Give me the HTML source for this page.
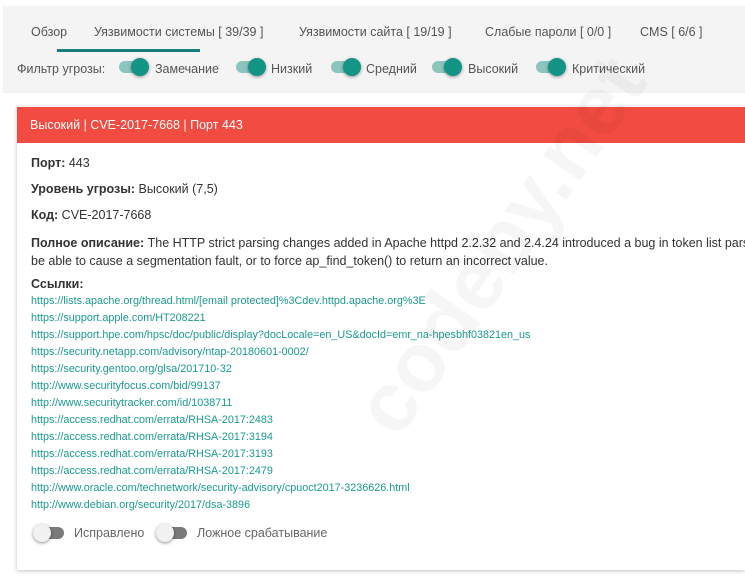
<!DOCTYPE html>
<html><head><meta charset="utf-8"><style>
html,body{margin:0;width:745px;height:583px;overflow:hidden}
body{background:#fff;font-family:"Liberation Sans",sans-serif;position:relative;color:#333}
.panel{position:absolute;left:3px;top:6px;width:742px;height:87px;background:#f4f4f4}
.tab{position:absolute;top:25px;font-size:12.5px;color:#555}
.ul{position:absolute;left:57px;top:49px;width:143px;height:3px;background:#167f7a}
.f{position:absolute;top:62px;font-size:12.5px;color:#555}
.sw{position:absolute;top:61px;width:26px;height:12px;border-radius:6px;background:#8cc5bd}
.sw i{position:absolute;right:-4px;top:-3px;width:18px;height:18px;border-radius:50%;background:#139484;box-shadow:0 1px 3px rgba(0,0,0,.4)}
.card{position:absolute;left:17px;top:107px;width:728px;height:463px;background:#fff;box-shadow:0 1px 4px rgba(0,0,0,.25);overflow:hidden}
.hd{height:36px;background:#f24b41;font-size:12.5px;line-height:36px;padding-left:13px;color:#fff}
.t{position:absolute;left:14px;font-size:12.5px;color:#333;white-space:nowrap}
b{color:#333}
.l{position:absolute;left:14px;font-size:10.8px;color:#1a9a8e;white-space:nowrap}
.off{position:absolute;top:420px;width:28px;height:12px;border-radius:6px;background:#7a7a7a}
.off i{position:absolute;left:-3px;top:-3px;width:18px;height:18px;border-radius:50%;background:#f1f1f1;box-shadow:0 1px 3px rgba(0,0,0,.45)}
.wm{position:absolute;left:500px;top:245px;font-size:84px;font-weight:bold;color:rgba(0,0,0,.035);transform:translate(-50%,-50%) rotate(-55deg);white-space:nowrap}
</style></head><body>
<div class="panel"></div>
<div class="tab" style="left:31px">Обзор</div>
<div class="tab" style="left:94px">Уязвимости системы [ 39/39 ]</div>
<div class="tab" style="left:299px">Уязвимости сайта [ 19/19 ]</div>
<div class="tab" style="left:485px">Слабые пароли [ 0/0 ]</div>
<div class="tab" style="left:640px">CMS [ 6/6 ]</div>
<div class="ul"></div>
<div class="f" style="left:17px">Фильтр угрозы:</div>
<div class="sw" style="left:119px"><i></i></div><div class="f" style="left:155px">Замечание</div>
<div class="sw" style="left:236px"><i></i></div><div class="f" style="left:271px">Низкий</div>
<div class="sw" style="left:331px"><i></i></div><div class="f" style="left:366px">Средний</div>
<div class="sw" style="left:432px"><i></i></div><div class="f" style="left:468px">Высокий</div>
<div class="sw" style="left:536px"><i></i></div><div class="f" style="left:572px">Критический</div>
<div class="card">
<div class="hd">Высокий | CVE-2017-7668 | Порт 443</div>
<div class="t" style="top:49px"><b>Порт:</b> 443</div>
<div class="t" style="top:75px"><b>Уровень угрозы:</b> Высокий (7,5)</div>
<div class="t" style="top:101px"><b>Код:</b> CVE-2017-7668</div>
<div class="t" style="top:127px;line-height:18px"><b>Полное описание:</b> The HTTP strict parsing changes added in Apache httpd 2.2.32 and 2.4.24 introduced a bug in token list parsing<br>be able to cause a segmentation fault, or to force ap_find_token() to return an incorrect value.</div>
<div class="t" style="top:170px"><b>Ссылки:</b></div>
<div class="l" style="top:188px">https://lists.apache.org/thread.html/[email protected]%3Cdev.httpd.apache.org%3E</div>
<div class="l" style="top:205px">https://support.apple.com/HT208221</div>
<div class="l" style="top:222px">https://support.hpe.com/hpsc/doc/public/display?docLocale=en_US&amp;docId=emr_na-hpesbhf03821en_us</div>
<div class="l" style="top:239px">https://security.netapp.com/advisory/ntap-20180601-0002/</div>
<div class="l" style="top:256px">https://security.gentoo.org/glsa/201710-32</div>
<div class="l" style="top:273px">http://www.securityfocus.com/bid/99137</div>
<div class="l" style="top:290px">http://www.securitytracker.com/id/1038711</div>
<div class="l" style="top:307px">https://access.redhat.com/errata/RHSA-2017:2483</div>
<div class="l" style="top:324px">https://access.redhat.com/errata/RHSA-2017:3194</div>
<div class="l" style="top:341px">https://access.redhat.com/errata/RHSA-2017:3193</div>
<div class="l" style="top:358px">https://access.redhat.com/errata/RHSA-2017:2479</div>
<div class="l" style="top:375px">http://www.oracle.com/technetwork/security-advisory/cpuoct2017-3236626.html</div>
<div class="l" style="top:392px">http://www.debian.org/security/2017/dsa-3896</div>
<div class="off" style="left:19px"><i></i></div><div class="t" style="top:419px;left:57px;color:#666">Исправлено</div>
<div class="off" style="left:142px"><i></i></div><div class="t" style="top:419px;left:180px;color:#666">Ложное срабатывание</div>
</div>
<div class="wm">codeby.net</div>
</body></html>
